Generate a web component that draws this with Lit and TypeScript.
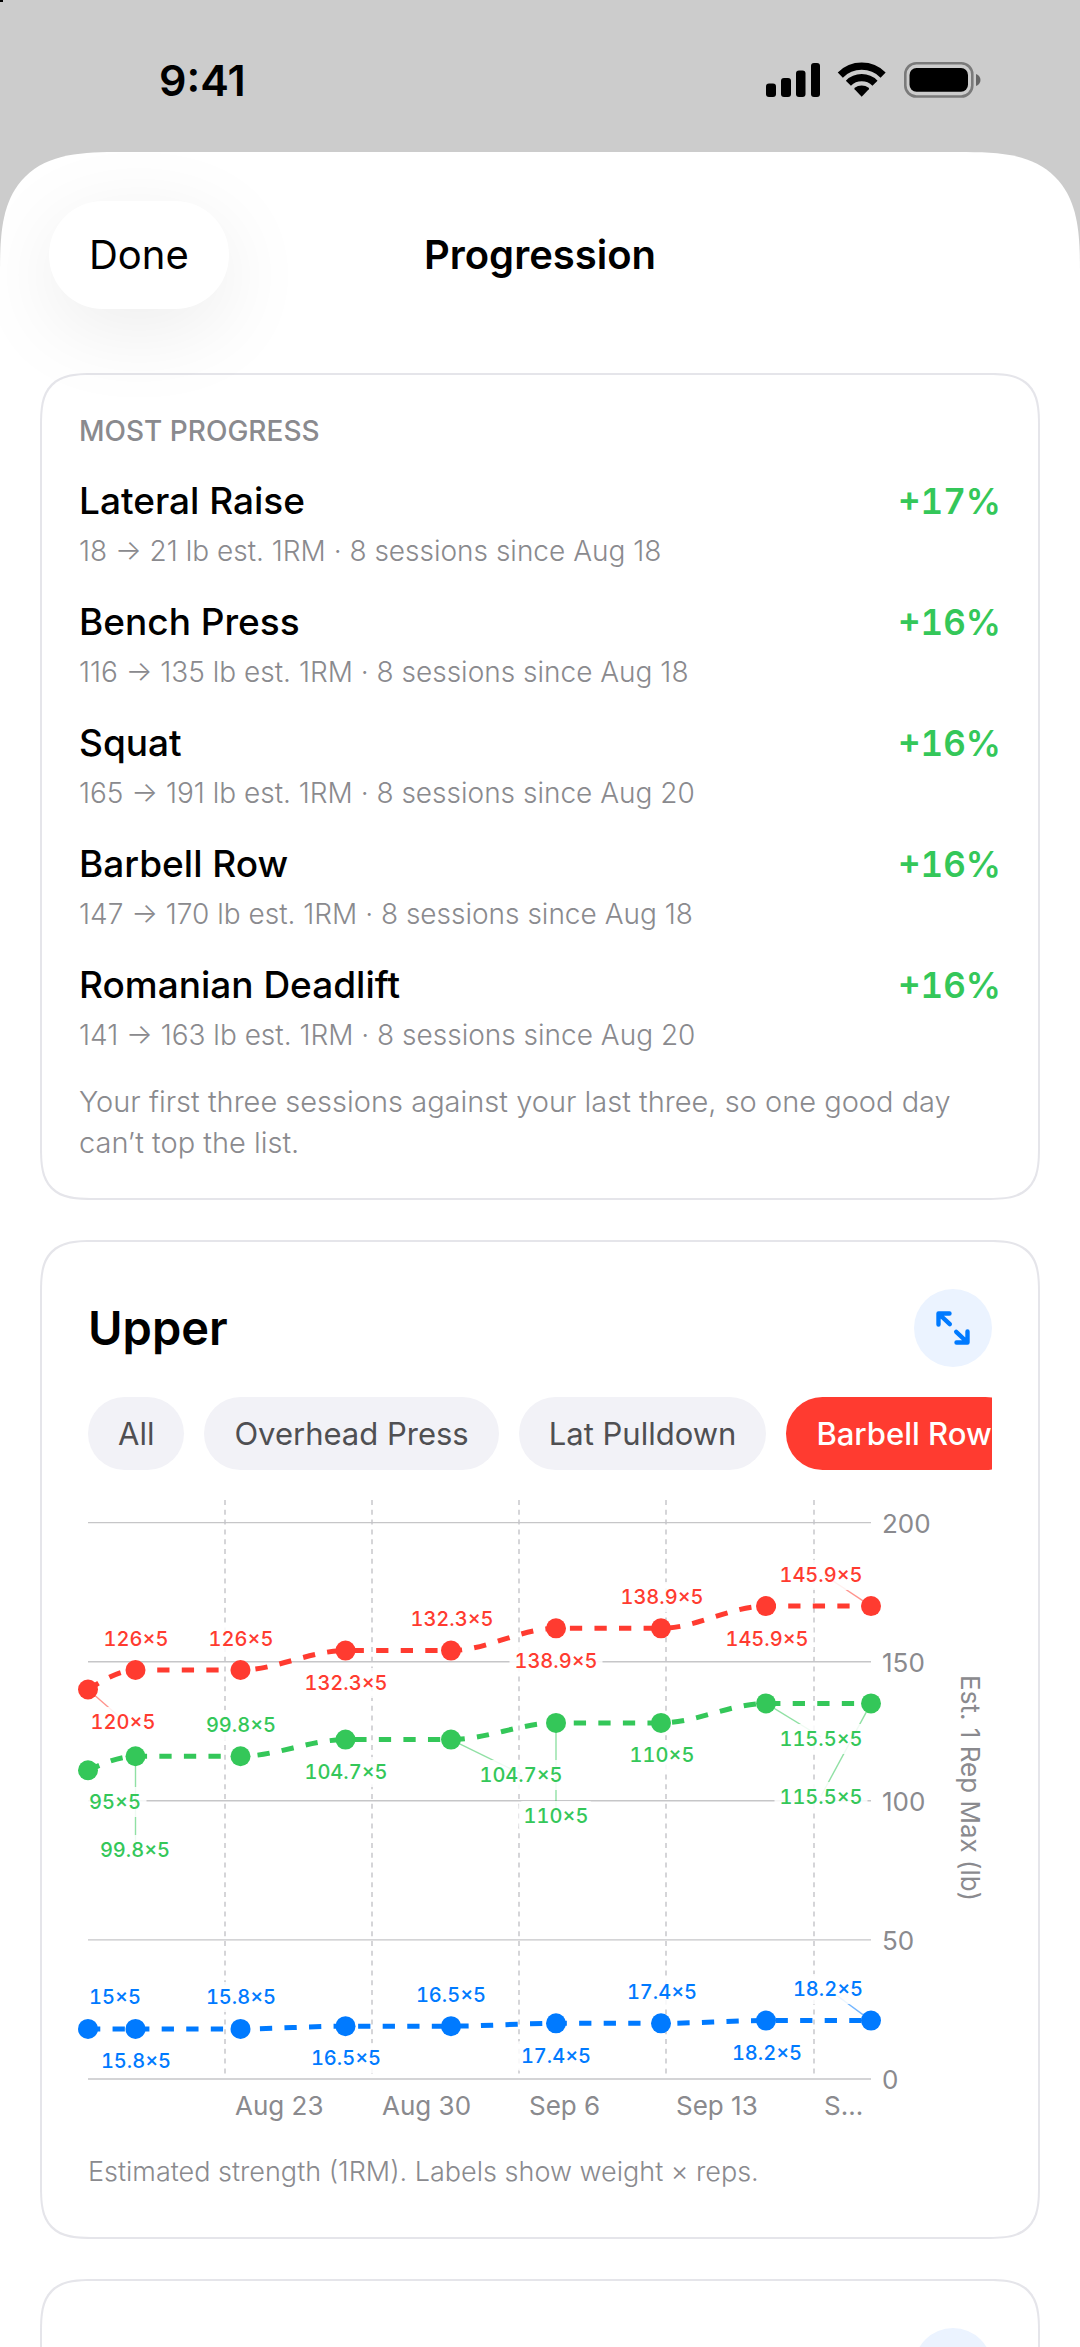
import { LitElement, html, css, svg } from "lit";
import { customElement, property, state } from "lit/decorators.js";
import { classMap } from "lit/directives/class-map.js";

interface Lift {
  name: string;
  detail: string;
  gain: string;
}

const LIFTS: Lift[] = [
  { name: "Lateral Raise", detail: "18 → 21 lb est. 1RM · 8 sessions since Aug 18", gain: "+17%" },
  { name: "Bench Press", detail: "116 → 135 lb est. 1RM · 8 sessions since Aug 18", gain: "+16%" },
  { name: "Squat", detail: "165 → 191 lb est. 1RM · 8 sessions since Aug 20", gain: "+16%" },
  { name: "Barbell Row", detail: "147 → 170 lb est. 1RM · 8 sessions since Aug 18", gain: "+16%" },
  { name: "Romanian Deadlift", detail: "141 → 163 lb est. 1RM · 8 sessions since Aug 20", gain: "+16%" },
];

const CHIPS = ["All", "Overhead Press", "Lat Pulldown", "Barbell Row"];

type Point = [number, number];

/** A weight label: text, centre x, centre y. */
type Tag = [string, number, number];

interface Series {
  color: string;
  values: number[];
  tags: Tag[];
  /** Leader lines: index of the data point, end x, end y. */
  leaders: [number, number, number][];
}

const PLOT_WIDTH = 783;
const BASELINE = 579;
const PER_POUND = 2.782;
const POINT_X = [0, 47.5, 152.5, 257.5, 363, 468, 573, 678, 783];
const WEEK_LINES: [number, string][] = [
  [137, "Aug 23"],
  [284, "Aug 30"],
  [431, "Sep 6"],
  [578, "Sep 13"],
  [726, "S..."],
];

const SERIES: Series[] = [
  {
    color: "#ff3b30",
    values: [140, 147, 147, 154, 154, 162, 162, 170, 170],
    tags: [
      ["120×5", 35, 222], ["126×5", 48, 139], ["126×5", 153, 139],
      ["132.3×5", 258, 183], ["132.3×5", 364, 119], ["138.9×5", 468, 161],
      ["138.9×5", 574, 97], ["145.9×5", 679, 139], ["145.9×5", 733, 75],
    ],
    leaders: [[0, 35, 220], [8, 736, 75]],
  },
  {
    color: "#34c759",
    values: [111, 116, 116, 122, 122, 128, 128, 135, 135],
    tags: [
      ["95×5", 27, 302], ["99.8×5", 47, 350], ["99.8×5", 153, 225],
      ["104.7×5", 258, 272], ["104.7×5", 433, 275], ["110×5", 468, 316],
      ["110×5", 574, 255], ["115.5×5", 733, 239], ["115.5×5", 733, 297],
    ],
    leaders: [[1, 47.5, 350], [4, 433, 274], [5, 468, 316], [7, 733, 237], [8, 733, 296]],
  },
  {
    color: "#007aff",
    values: [18, 18, 18, 19, 19, 20, 20, 21, 21],
    tags: [
      ["15×5", 27, 497], ["15.8×5", 48, 561], ["15.8×5", 153, 497],
      ["16.5×5", 258, 558], ["16.5×5", 363, 495], ["17.4×5", 468, 556],
      ["17.4×5", 574, 492], ["18.2×5", 679, 553], ["18.2×5", 740, 489],
    ],
    leaders: [[8, 740, 489]],
  },
];

const yOf = (pounds: number) => BASELINE - pounds * PER_POUND;

/** Monotone cubic path through the points. */
function monotonePath(points: Point[]): string {
  const n = points.length;
  const slopes = points.slice(1).map((p, i) => (p[1] - points[i][1]) / (p[0] - points[i][0]));
  const tangents = points.map((_, i) => {
    if (i === 0 || i === n - 1) return 0;
    const a = slopes[i - 1];
    const b = slopes[i];
    if (a * b <= 0) return 0;
    return (Math.sign(a) + Math.sign(b)) * Math.min(Math.abs(a), Math.abs(b), Math.abs(a + b) / 4);
  });
  tangents[0] = (3 * slopes[0] - tangents[1]) / 2;
  tangents[n - 1] = (3 * slopes[n - 2] - tangents[n - 2]) / 2;
  let d = `M${points[0][0]},${points[0][1]}`;
  for (let i = 1; i < n; i++) {
    const [x0, y0] = points[i - 1];
    const [x1, y1] = points[i];
    const third = (x1 - x0) / 3;
    d += `C${x0 + third},${y0 + tangents[i - 1] * third} ${x1 - third},${y1 - tangents[i] * third} ${x1},${y1}`;
  }
  return d;
}

@customElement("status-bar")
class StatusBar extends LitElement {
  static styles = css`
    :host {
      display: flex;
      flex: none;
      align-items: center;
      justify-content: space-between;
      box-sizing: border-box;
      height: 152px;
      padding: 8px 98px 0 159px;
    }
    .time {
      font-size: 43px;
      font-weight: 600;
      line-height: 52px;
    }
    .icons {
      display: block;
      width: 216px;
      height: 38px;
    }
  `;

  render() {
    return html`
      <span class="time">9:41</span>
      <svg class="icons" viewBox="766 60 216 38" role="img" aria-label="Signal, Wi-Fi and battery">
        <rect x="766" y="82.5" width="10" height="13.5" rx="3" />
        <rect x="781" y="77" width="10" height="19" rx="3" />
        <rect x="796" y="69.5" width="9.5" height="26.5" rx="3" />
        <rect x="811" y="62" width="9" height="34" rx="3" />
        <g fill="none" stroke="#000" stroke-width="7.2">
          <path d="M840.3 74.1A30.2 30.2 0 0 1 883.1 74.1" />
          <path d="M848.4 82.2A18.8 18.8 0 0 1 875 82.2" />
        </g>
        <path d="M861.7 95.8L854.6 88.3A1.2 1.2 0 0 1 854.7 86.8A11.4 11.4 0 0 1 868.7 86.8A1.2 1.2 0 0 1 868.8 88.3Z" />
        <rect x="905.3" y="62.3" width="67" height="33.2" rx="11" fill="none" stroke="#000" stroke-opacity="0.4" stroke-width="2.6" />
        <rect x="909.5" y="67" width="58.5" height="23.7" rx="7" />
        <path d="M976 73C982 75 982 83 976 85Z" fill-opacity="0.5" />
      </svg>
    `;
  }
}

@customElement("expand-button")
class ExpandButton extends LitElement {
  static styles = css`
    :host {
      display: block;
      flex: none;
    }
    .button {
      display: grid;
      place-items: center;
      width: 78px;
      height: 78px;
      padding: 0;
      border: 0;
      border-radius: 50%;
      background: #ebf3ff;
      color: #007aff;
    }
    .glyph {
      display: block;
      width: 36px;
      height: 36px;
    }
  `;

  render() {
    return html`
      <button class="button" type="button" aria-label="Expand chart">
        <svg class="glyph" viewBox="0 0 36 36" fill="none" stroke="currentColor" stroke-width="4.4" stroke-linecap="round" stroke-linejoin="round" aria-hidden="true">
          <path d="M14.5 3.5H3.5V14.5M4.5 4.5L14.8 14.2" />
          <path d="M21.5 32.5H32.5V21.5M31.5 31.5L21.2 21.8" />
          <path d="M3 3h7l-7 7zM33 33h-7l7-7z" fill="currentColor" stroke="none" />
        </svg>
      </button>
    `;
  }
}

@customElement("strength-chart")
class StrengthChart extends LitElement {
  static styles = css`
    :host {
      display: block;
    }
    .chart {
      display: block;
      width: 100%;
      overflow: visible;
    }
    .grid {
      stroke: #c6c6c8;
      stroke-width: 1.4;
    }
    .week {
      stroke: #c4c4c8;
      stroke-width: 1.4;
      stroke-dasharray: 5 4.8;
    }
    .axis {
      fill: #8a8a8e;
      font-size: 26px;
    }
    .tag {
      font-size: 20px;
      font-weight: 500;
      font-variant-numeric: tabular-nums;
      text-anchor: middle;
    }
    .plate {
      fill: #fff;
      fill-opacity: 0.86;
    }
    .line {
      fill: none;
      stroke-width: 5;
      stroke-dasharray: 12.28;
    }
    .leader {
      stroke-width: 1.4;
      stroke-opacity: 0.55;
    }
  `;

  private tag([text, x, y]: Tag, color: string) {
    const dot = text.includes(".") ? 1 : 0;
    const width = (text.length - dot) * 12 + dot * 6 + 15;
    return svg`
      <rect class="plate" x=${x - width / 2} y=${y - 15} width=${width} height="30" rx="5" />
      <text class="tag" x=${x} y=${y + 7} fill=${color}>${text}</text>
    `;
  }

  render() {
    const plotted = SERIES.map((s) => ({
      ...s,
      points: s.values.map((v, i): Point => [POINT_X[i], yOf(v)]),
    }));
    return html`
      <svg class="chart" viewBox="0 0 904 624" role="img" aria-label="Estimated one rep max in pounds by date">
        ${[0, 50, 100, 150, 200].map((v) => svg`
          <line class="grid" x1="0" x2=${PLOT_WIDTH} y1=${yOf(v)} y2=${yOf(v)} />
          <text class="axis" x="794" y=${Math.round(yOf(v)) + 10}>${v}</text>
        `)}
        ${WEEK_LINES.map(([x, label]) => svg`
          <line class="week" x1=${x} x2=${x} y1="0" y2="576" />
          <text class="axis" x=${x + 10} y="615">${label}</text>
        `)}
        <text class="axis" text-anchor="middle" transform="translate(873 288) rotate(90)">Est. 1 Rep Max (lb)</text>
        ${plotted.map((s) => s.leaders.map(([i, x, y]) => svg`
          <line class="leader" stroke=${s.color} x1=${s.points[i][0]} y1=${s.points[i][1]} x2=${x} y2=${y} />
        `))}
        ${plotted.map((s) => s.tags.map((t) => this.tag(t, s.color)))}
        ${plotted.map((s) => svg`
          <path class="line" stroke=${s.color} d=${monotonePath(s.points)} />
          ${s.points.map(([x, y]) => svg`<circle cx=${x} cy=${y} r="10" fill=${s.color} />`)}
        `)}
      </svg>
    `;
  }
}

@customElement("filter-chips")
class FilterChips extends LitElement {
  @property({ attribute: false }) options: string[] = [];
  @state() private selected = "Barbell Row";

  static styles = css`
    :host {
      display: flex;
      gap: 20px;
      overflow: hidden;
    }
    .chip {
      flex: none;
      height: 73px;
      padding: 0 30px;
      border: 0;
      border-radius: 37px;
      background: #f2f2f7;
      color: #4f4f52;
      font-family: inherit;
      font-size: 31px;
      font-weight: 400;
      line-height: 40px;
      white-space: nowrap;
    }
    .selected {
      background: #ff3b30;
      color: #fff;
      font-weight: 500;
    }
  `;

  render() {
    return this.options.map((name) => html`
      <button
        type="button"
        class=${classMap({ chip: true, selected: name === this.selected })}
        aria-pressed=${name === this.selected ? "true" : "false"}
        @click=${() => (this.selected = name)}
      >${name}</button>
    `);
  }
}

@customElement("app-root")
class AppRoot extends LitElement {
  static styles = css`
    :host {
      display: flex;
      flex-direction: column;
      position: relative;
      height: 100vh;
      overflow: hidden;
      background: #ccc;
      color: #000;
      font-family: Inter, "Liberation Sans", sans-serif;
    }
    .notch {
      position: absolute;
      top: 0;
      left: 0;
      width: 3px;
      height: 2px;
      background: #000;
    }
    .sheet {
      flex: 1;
      min-height: 0;
      overflow: hidden;
      border-radius: 86px 86px 0 0;
      background: #fff;
    }
    .header {
      display: grid;
      grid-template-columns: 1fr auto 1fr;
      align-items: center;
      position: relative;
      z-index: 1;
      padding: 49px 49px 64px;
    }
    .done {
      justify-self: start;
      height: 108px;
      padding: 0 40px;
      border: 0;
      border-radius: 54px;
      background: #fff;
      box-shadow: 0 20px 88px rgba(0, 0, 0, 0.08);
      color: #000;
      font-family: inherit;
      font-size: 40px;
      line-height: 48px;
    }
    .title {
      margin: 0;
      font-size: 40px;
      font-weight: 600;
      line-height: 48px;
    }
    .cards {
      display: flex;
      flex-direction: column;
      gap: 40px;
      padding: 0 40px;
    }
    .card {
      display: flex;
      flex-direction: column;
      border: 2px solid #e5e5ea;
      border-radius: 40px;
      background: #fff;
    }
    .summary {
      gap: 26px;
      padding: 38px 37px 35px;
    }
    .workout {
      gap: 30px;
      padding: 47px 46px;
    }
    .eyebrow {
      margin: 0;
      color: #8a8a8e;
      font-size: 28px;
      font-weight: 500;
      line-height: 37px;
    }
    .lifts {
      display: flex;
      flex-direction: column;
      gap: 26px;
      margin: 0;
      padding: 0;
      list-style: none;
    }
    .lift {
      display: flex;
      flex-direction: column;
      gap: 5px;
    }
    .headline {
      display: flex;
      align-items: baseline;
      justify-content: space-between;
      font-size: 37px;
      font-weight: 500;
      line-height: 50px;
    }
    .gain {
      color: #34c759;
      font-size: 35px;
      font-weight: 600;
      font-variant-numeric: tabular-nums;
    }
    .detail,
    .note {
      margin: 0;
      color: #8a8a8e;
      font-size: 28px;
      font-weight: 300;
      line-height: 40px;
    }
    .note {
      font-size: 29px;
      line-height: 41px;
    }
    .bar {
      display: flex;
      align-items: center;
      justify-content: space-between;
    }
    .bare {
      justify-content: flex-end;
    }
    .name {
      margin: 0;
      font-size: 47px;
      font-weight: 600;
      line-height: 56px;
    }
    .caption {
      margin: 0;
      color: #8a8a8e;
      font-size: 27px;
      font-weight: 300;
      line-height: 36px;
    }
    @supports (corner-shape: superellipse(1.6)) {
      .sheet {
        border-radius: 122px 122px 0 0;
        corner-shape: superellipse(1.6);
      }
      .card {
        border-radius: 54px;
        corner-shape: superellipse(1.6);
      }
    }
  `;

  render() {
    return html`
      <div class="notch"></div>
      <status-bar></status-bar>
      <main class="sheet">
        <header class="header">
          <button class="done" type="button">Done</button>
          <h1 class="title">Progression</h1>
        </header>
        <div class="cards">
          <section class="card summary">
            <h2 class="eyebrow">MOST PROGRESS</h2>
            <ul class="lifts">
              ${LIFTS.map((lift) => html`
                <li class="lift">
                  <div class="headline">
                    <span>${lift.name}</span>
                    <span class="gain">${lift.gain}</span>
                  </div>
                  <p class="detail">${lift.detail}</p>
                </li>
              `)}
            </ul>
            <p class="note">Your first three sessions against your last three, so one good day can’t top the list.</p>
          </section>
          <section class="card workout">
            <div class="bar">
              <h2 class="name">Upper</h2>
              <expand-button></expand-button>
            </div>
            <filter-chips .options=${CHIPS}></filter-chips>
            <strength-chart></strength-chart>
            <p class="caption">Estimated strength (1RM). Labels show weight × reps.</p>
          </section>
          <section class="card workout">
            <div class="bar bare">
              <expand-button></expand-button>
            </div>
          </section>
        </div>
      </main>
    `;
  }
}
